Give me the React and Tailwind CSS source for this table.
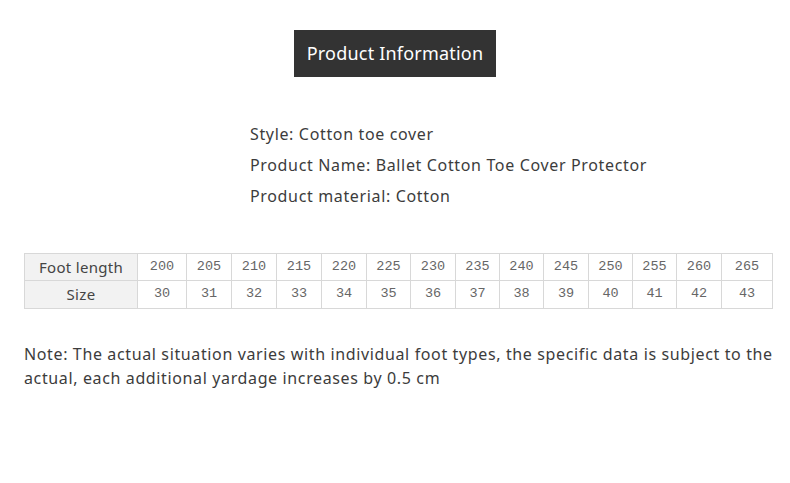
export default function App() {
  const lengths = [200, 205, 210, 215, 220, 225, 230, 235, 240, 245, 250, 255, 260, 265];
  const sizes = [30, 31, 32, 33, 34, 35, 36, 37, 38, 39, 40, 41, 42, 43];
  const widths = [49, 45, 45, 45, 45, 44, 45, 44, 44, 45, 44, 44, 45, 51];
  const sans = { fontFamily: '"Noto Sans", "Open Sans", sans-serif' };
  return (
    <div className="w-[790px] h-[483px] bg-white relative overflow-hidden text-[#3a3a3a]" style={sans}>
      <div className="pt-[30px] flex justify-center">
        <div className="w-[202px] h-[47px] bg-[#333333] text-white text-[18px] flex items-center justify-center tracking-[0.2px]">
          Product Information
        </div>
      </div>
      <div className="pl-[250px] pt-[42px] text-[16px] leading-[31px] tracking-[0.65px] text-[#3c3c3c]">
        <div>Style: Cotton toe cover</div>
        <div>Product Name: Ballet Cotton Toe Cover Protector</div>
        <div>Product material: Cotton</div>
      </div>
      <div className="pl-[24px] pt-[41px]">
        <table className="border-collapse" style={{ fontFamily: '"Liberation Mono", monospace' }}>
          <tbody>
            <tr className="h-[27px]">
              <td className="w-[113px] border border-[#d8d8d8] bg-[#f2f2f2] text-center text-[15px] tracking-[0.3px] text-[#444] p-0" style={sans}>Foot length</td>
              {lengths.map((v, i) => (
                <td key={i} className="border border-[#d8d8d8] text-center text-[13.5px] text-[#666] p-0" style={{ width: widths[i] }}>{v}</td>
              ))}
            </tr>
            <tr className="h-[28px]">
              <td className="border border-[#d8d8d8] bg-[#f2f2f2] text-center text-[15px] tracking-[0.3px] text-[#444] p-0" style={sans}>Size</td>
              {sizes.map((v, i) => (
                <td key={i} className="border border-[#d8d8d8] text-center text-[13.5px] text-[#666] p-0">{v}</td>
              ))}
            </tr>
          </tbody>
        </table>
      </div>
      <div className="pl-[24px] pr-[6px] pt-[33px] text-[16px] leading-[24px] tracking-[0.63px] text-[#3c3c3c]">
        Note: The actual situation varies with individual foot types, the specific data is subject to the actual, each additional yardage increases by 0.5 cm
      </div>
    </div>
  );
}
